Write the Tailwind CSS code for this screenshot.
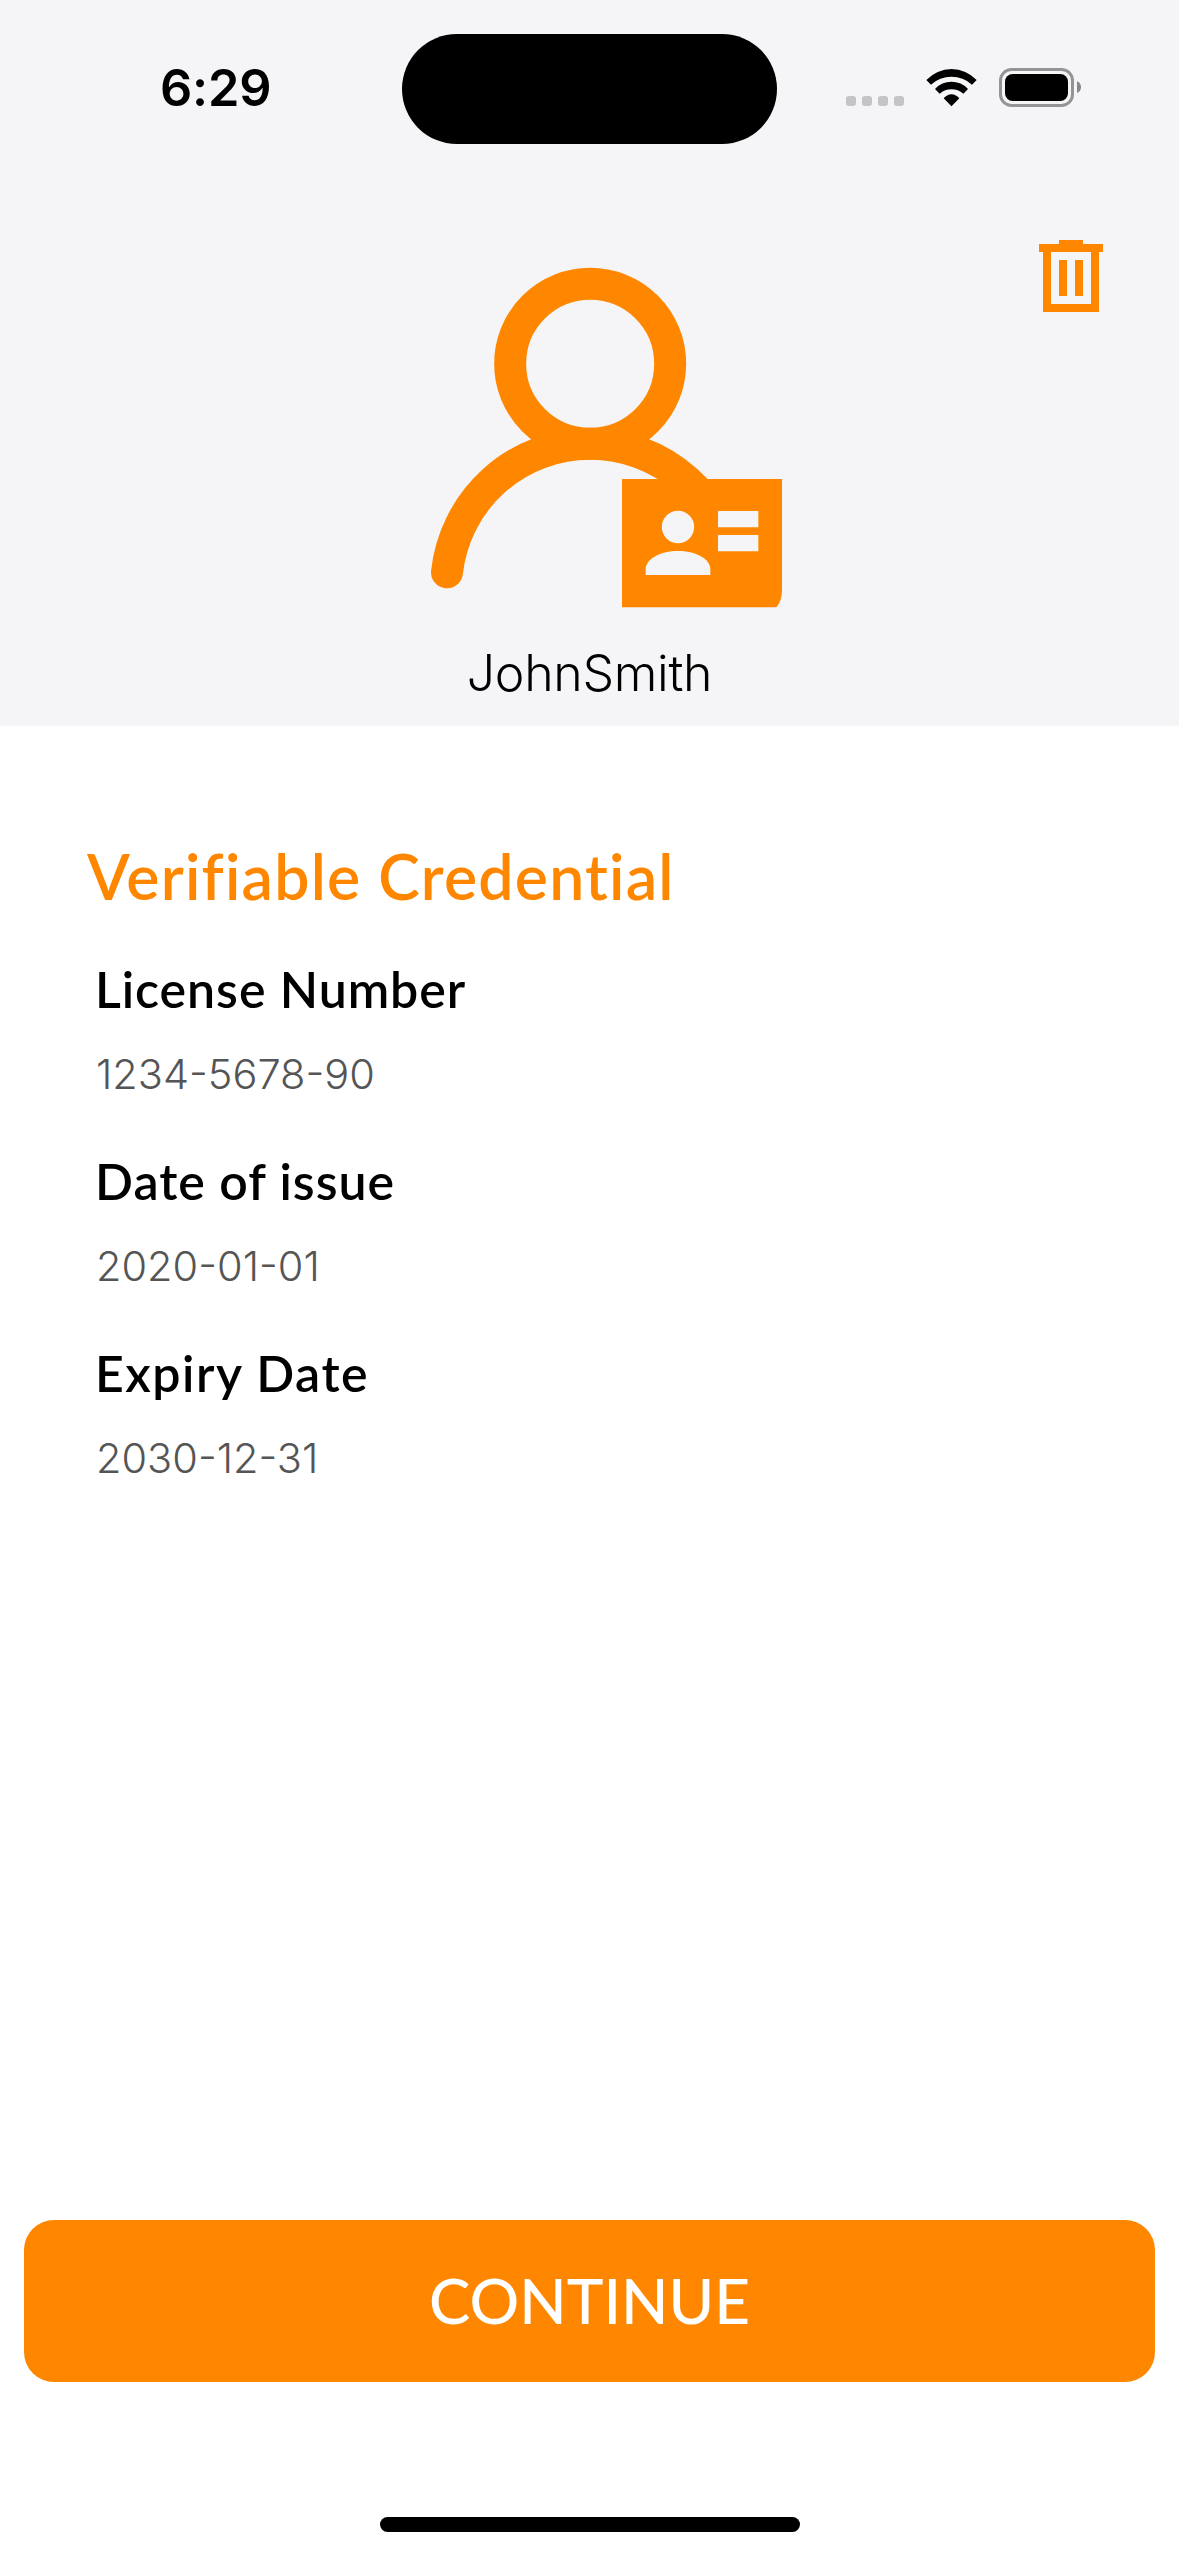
<!DOCTYPE html>
<html lang="en">
<head>
<meta charset="utf-8">
<meta name="viewport" content="width=device-width">
<title>Verifiable Credential</title>
<script src="https://cdn.jsdelivr.net/npm/@tailwindcss/browser@4"></script>
</head>
<body class="bg-white">
<div class="flex h-[2556px] w-[1179px] flex-col overflow-hidden bg-white font-['Lato',sans-serif] text-black">
  <header class="flex h-[726px] flex-col bg-[#f5f5f8]">
    <!-- Status bar -->
    <div class="flex h-[160px] items-start pl-[160px]">
      <div class="mt-[58px] w-[242px] font-['Inter',sans-serif] text-[50.5px] leading-[60px] font-[560] tracking-[-0.2px]">6:29</div>
      <div class="mt-[33.5px] h-[110.5px] w-[375px] rounded-full bg-black"></div>
      <svg class="mt-5 ml-[3px] h-[140px] w-[360px]" viewBox="0 0 1080 420">
        <g fill="#c4c4c6">
          <rect x="198" y="228" width="30" height="30" rx="9"/>
          <rect x="246" y="228" width="30" height="30" rx="9"/>
          <rect x="294" y="228" width="30" height="30" rx="9"/>
          <rect x="342" y="228" width="30" height="30" rx="9"/>
        </g>
        <path d="M439 180A103 103 0 0 1 590 180L576 194A91 91 0 0 0 453 194ZM465 207A67 67 0 0 1 564 207L550 221A55 55 0 0 0 479 221ZM491 235A29 29 0 0 1 538 235L514.500 259Z"/>
        <rect x="661.500" y="148.500" width="216" height="108" rx="33" fill="none" stroke="#949496" stroke-width="9"/>
        <rect x="675" y="162" width="189" height="81" rx="23"/>
        <path d="M891 184Q903 190 903 201.500T891 219Z" fill="#88888a"/>
      </svg>
    </div>
    <!-- Profile picture and delete action -->
    <div class="flex h-[483px] items-start pt-20 pl-[400px]">
      <svg class="h-[400px] w-[400px] shrink-0" viewBox="0 0 1200 1200">
        <g fill="none" stroke="#ff8700" stroke-width="96">
          <circle cx="570.500" cy="371" r="240"/>
          <path d="M141 997A432 432 0 0 1 1000 997" stroke-linecap="round"/>
        </g>
        <path d="M666 717H1146V1050Q1146 1082 1129 1102H666Z" fill="#ff8700"/>
        <g fill="#f5f5f8">
          <circle cx="834" cy="861" r="48.500"/>
          <path d="M737 1005V988C737 956 782 933 834 933S931 956 931 988V1005Z"/>
          <path d="M954 813H1075V862H954ZM954 885H1075V934H954Z"/>
        </g>
      </svg>
      <svg class="ml-[239px] h-[72px] w-[64px] shrink-0" viewBox="0 0 64 72" fill="#ff8700">
        <path fill-rule="evenodd" d="M20 0H44V4H64V12H60V72H4V12H0V4H20ZM12 12V64H52V12Z"/>
        <path d="M20 20H28V56H20ZM36 20H44V56H36Z"/>
      </svg>
    </div>
    <div class="text-center font-['Inter',sans-serif] text-[50px] leading-[60px] font-light tracking-[-0.3px]">JohnSmith</div>
  </header>

  <main class="flex h-[1494px] flex-col pt-[112px] pl-[87px]">
    <h1 class="text-[62.5px] leading-[76px] font-semibold tracking-[1.2px] text-[#ff8700]">Verifiable Credential</h1>
    <dl class="mt-[45px] flex flex-col gap-[52px] pl-2">
      <div class="flex flex-col gap-[30px]">
        <dt class="text-[50px] leading-[60px] font-semibold tracking-[0.95px]">License Number</dt>
        <dd class="pl-px font-['Inter',sans-serif] text-[41.5px] leading-[50px] font-light text-[#555]">1234-5678-90</dd>
      </div>
      <div class="flex flex-col gap-[30px]">
        <dt class="text-[50px] leading-[60px] font-semibold tracking-[1px]">Date of issue</dt>
        <dd class="pl-px font-['Inter',sans-serif] text-[41.5px] leading-[50px] font-light text-[#555]">2020-01-01</dd>
      </div>
      <div class="flex flex-col gap-[30px]">
        <dt class="text-[50px] leading-[60px] font-semibold tracking-[1.5px]">Expiry Date</dt>
        <dd class="pl-px font-['Inter',sans-serif] text-[41.5px] leading-[50px] font-light text-[#555]">2030-12-31</dd>
      </div>
    </dl>
  </main>

  <footer class="flex flex-col items-center">
    <button class="h-[162px] w-[1131px] rounded-[30px] bg-[#ff8700] pb-0.5 text-[62px] leading-[76px] font-medium text-white">CONTINUE</button>
    <div class="mt-[135px] h-[15px] w-[420px] rounded-full bg-black"></div>
  </footer>
</div>
</body>
</html>
